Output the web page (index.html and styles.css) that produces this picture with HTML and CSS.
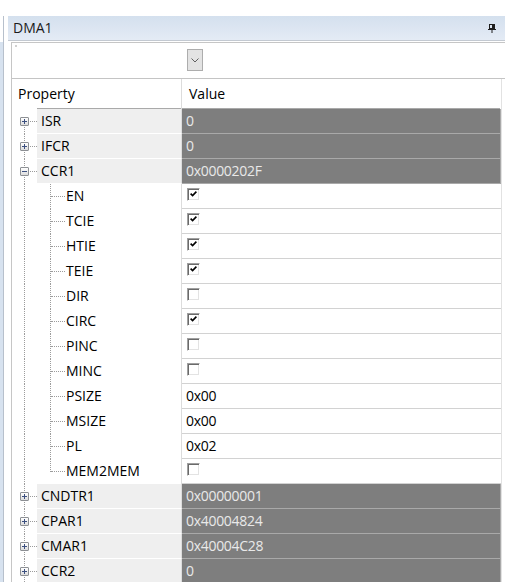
FILE: index.html
```html
<!DOCTYPE html>
<html>
<head>
<meta charset="utf-8">
<link rel="stylesheet" href="styles.css">
</head>
<body>
<div class="frame">
  <div class="side"></div>
  <div class="panel">
    <div class="titlebar">
      <span class="title">DMA1</span>
      <svg class="pin" width="8" height="9" viewBox="0 0 8 9">
        <rect x="1.5" y="0.5" width="5" height="4" fill="none" stroke="#1e1e1e"/>
        <rect x="4" y="1" width="2" height="4" fill="#1e1e1e"/>
        <rect x="0" y="5" width="8" height="1" fill="#1e1e1e"/>
        <rect x="3.5" y="6" width="1" height="3" fill="#1e1e1e"/>
      </svg>
    </div>
    <div class="content">
      <div class="toolbar">
        <div class="ddbtn">
          <svg width="8" height="5" viewBox="0 0 8 5"><polyline points="0.5,0.5 4,4 7.5,0.5" fill="none" stroke="#606060" stroke-width="1"/></svg>
        </div>
      </div>
      <div class="grid">
        <div class="header">
          <div class="h-prop">Property</div>
          <div class="h-val">Value</div>
        </div>

        <div class="row top first">
          <div class="gut"><span class="v"></span><span class="h"></span><span class="exp plus"></span></div>
          <div class="name">ISR</div>
          <div class="val dark">0</div>
        </div>
        <div class="row top">
          <div class="gut"><span class="v"></span><span class="h"></span><span class="exp plus"></span></div>
          <div class="name">IFCR</div>
          <div class="val dark">0</div>
        </div>
        <div class="row top">
          <div class="gut"><span class="v"></span><span class="h"></span><span class="exp minus"></span></div>
          <div class="name">CCR1</div>
          <div class="val dark">0x0000202F</div>
        </div>

        <div class="row child">
          <div class="gut"><span class="v"></span><span class="v2"></span><span class="h2"></span></div>
          <div class="name">EN</div>
          <div class="val cbcell"><span class="cb on"><svg width="7" height="6" viewBox="0 0 7 6"><polyline points="0.6,2.6 2.6,4.6 6.4,0.6" fill="none" stroke="#000" stroke-width="1.6"/></svg></span></div>
        </div>
        <div class="row child">
          <div class="gut"><span class="v"></span><span class="v2"></span><span class="h2"></span></div>
          <div class="name">TCIE</div>
          <div class="val cbcell"><span class="cb on"><svg width="7" height="6" viewBox="0 0 7 6"><polyline points="0.6,2.6 2.6,4.6 6.4,0.6" fill="none" stroke="#000" stroke-width="1.6"/></svg></span></div>
        </div>
        <div class="row child">
          <div class="gut"><span class="v"></span><span class="v2"></span><span class="h2"></span></div>
          <div class="name">HTIE</div>
          <div class="val cbcell"><span class="cb on"><svg width="7" height="6" viewBox="0 0 7 6"><polyline points="0.6,2.6 2.6,4.6 6.4,0.6" fill="none" stroke="#000" stroke-width="1.6"/></svg></span></div>
        </div>
        <div class="row child">
          <div class="gut"><span class="v"></span><span class="v2"></span><span class="h2"></span></div>
          <div class="name">TEIE</div>
          <div class="val cbcell"><span class="cb on"><svg width="7" height="6" viewBox="0 0 7 6"><polyline points="0.6,2.6 2.6,4.6 6.4,0.6" fill="none" stroke="#000" stroke-width="1.6"/></svg></span></div>
        </div>
        <div class="row child">
          <div class="gut"><span class="v"></span><span class="v2"></span><span class="h2"></span></div>
          <div class="name">DIR</div>
          <div class="val cbcell"><span class="cb"></span></div>
        </div>
        <div class="row child">
          <div class="gut"><span class="v"></span><span class="v2"></span><span class="h2"></span></div>
          <div class="name">CIRC</div>
          <div class="val cbcell"><span class="cb on"><svg width="7" height="6" viewBox="0 0 7 6"><polyline points="0.6,2.6 2.6,4.6 6.4,0.6" fill="none" stroke="#000" stroke-width="1.6"/></svg></span></div>
        </div>
        <div class="row child">
          <div class="gut"><span class="v"></span><span class="v2"></span><span class="h2"></span></div>
          <div class="name">PINC</div>
          <div class="val cbcell"><span class="cb"></span></div>
        </div>
        <div class="row child">
          <div class="gut"><span class="v"></span><span class="v2"></span><span class="h2"></span></div>
          <div class="name">MINC</div>
          <div class="val cbcell"><span class="cb"></span></div>
        </div>
        <div class="row child">
          <div class="gut"><span class="v"></span><span class="v2"></span><span class="h2"></span></div>
          <div class="name">PSIZE</div>
          <div class="val">0x00</div>
        </div>
        <div class="row child">
          <div class="gut"><span class="v"></span><span class="v2"></span><span class="h2"></span></div>
          <div class="name">MSIZE</div>
          <div class="val">0x00</div>
        </div>
        <div class="row child">
          <div class="gut"><span class="v"></span><span class="v2"></span><span class="h2"></span></div>
          <div class="name">PL</div>
          <div class="val">0x02</div>
        </div>
        <div class="row child lastchild">
          <div class="gut"><span class="v"></span><span class="v2"></span><span class="h2"></span></div>
          <div class="name">MEM2MEM</div>
          <div class="val cbcell"><span class="cb"></span></div>
        </div>

        <div class="row top">
          <div class="gut"><span class="v"></span><span class="h"></span><span class="exp plus"></span></div>
          <div class="name">CNDTR1</div>
          <div class="val dark">0x00000001</div>
        </div>
        <div class="row top">
          <div class="gut"><span class="v"></span><span class="h"></span><span class="exp plus"></span></div>
          <div class="name">CPAR1</div>
          <div class="val dark">0x40004824</div>
        </div>
        <div class="row top">
          <div class="gut"><span class="v"></span><span class="h"></span><span class="exp plus"></span></div>
          <div class="name">CMAR1</div>
          <div class="val dark">0x40004C28</div>
        </div>
        <div class="row top">
          <div class="gut"><span class="v"></span><span class="h"></span><span class="exp plus"></span></div>
          <div class="name">CCR2</div>
          <div class="val dark">0</div>
        </div>
      </div>
    </div>
  </div>
</div>
</body>
</html>
```
FILE: styles.css
```css
* { box-sizing: border-box; }

body {
  margin: 0;
  width: 505px;
  height: 582px;
  overflow: hidden;
  background: #fff;
  font-family: "Open Sans", "Noto Sans", sans-serif;
  font-size: 14px;
  color: #000;
}

.frame {
  display: flex;
  height: 100%;
  padding-top: 16px;
}

.side {
  flex: none;
  width: 4px;
  border-right: 1px solid #b7c0cc;
  background: linear-gradient(#fff 0 26px, #d7e2ef 26px);
}

.panel {
  flex: 1;
  min-width: 0;
  margin-left: 4px;
  display: flex;
  flex-direction: column;
}

.titlebar {
  flex: none;
  height: 25px;
  display: flex;
  align-items: center;
  justify-content: space-between;
  padding: 0 9px 0 5px;
  background: linear-gradient(#d4e0ee, #e4ebf5);
  border-bottom: 1px solid #c3c9d1;
  color: #1b1b1b;
}

.title { line-height: 24px; }

.pin { display: block; margin-top: 1px; }

.content {
  flex: 1;
  margin: 1px 0 0 3px;
  border-left: 1px solid #c6c6c6;
  border-top: 1px solid #c6c6c6;
}

.toolbar {
  height: 36px;
  padding: 6px 0 0 175px;
  border-bottom: 1px solid #c4c4c4;
  background: linear-gradient(#d0d0d0, #d0d0d0) 3px 2px / 2px 2px no-repeat;
}

.ddbtn {
  width: 16px;
  height: 22px;
  border: 1px solid #adadad;
  background: #e3e3e3;
  display: flex;
  align-items: center;
  justify-content: center;
}

.grid {
  width: 490px;
  border-right: 1px solid #e2e2e2;
}

.header {
  display: flex;
  height: 30px;
  background: linear-gradient(#a9a9a9, #a9a9a9) 25px 100% / 463px 1px no-repeat;
}

.h-prop {
  width: 170px;
  padding: 5px 0 0 6px;
  border-right: 1px solid #dcdcdc;
}

.h-val {
  flex: 1;
  padding: 5px 0 0 7px;
}

.row {
  display: flex;
  height: 25px;
}

.gut {
  position: relative;
  flex: none;
  width: 25px;
}

.child .gut { width: 54px; }

.gut .v {
  position: absolute;
  left: 12px;
  top: 0;
  bottom: 0;
  border-left: 1px dotted #9c9c9c;
}

.first .gut .v { top: 12px; }

.gut .h {
  position: absolute;
  left: 13px;
  top: 12px;
  width: 12px;
  border-top: 1px dotted #9c9c9c;
}

.gut .v2 {
  position: absolute;
  left: 38px;
  top: 0;
  bottom: 0;
  border-left: 1px dotted #9c9c9c;
}

.lastchild .gut .v2 { bottom: 12px; }

.gut .h2 {
  position: absolute;
  left: 39px;
  top: 12px;
  width: 14px;
  border-top: 1px dotted #9c9c9c;
}

.exp {
  position: absolute;
  left: 8px;
  top: 8px;
  width: 9px;
  height: 9px;
  border: 1px solid #8d9094;
  border-radius: 1px;
  background: linear-gradient(#ffffff, #dcdcdc);
}

.exp::before {
  content: "";
  position: absolute;
  left: 1px;
  top: 3px;
  width: 5px;
  height: 1px;
  background: #3b4f7f;
}

.exp.plus::after {
  content: "";
  position: absolute;
  left: 3px;
  top: 1px;
  width: 1px;
  height: 5px;
  background: #3b4f7f;
}

.name {
  flex: none;
  line-height: 24px;
  border-right: 1px solid #dcdcdc;
  white-space: nowrap;
}

.top .name {
  width: 145px;
  padding-left: 4px;
  background: #efefef;
  border-bottom: 1px solid #fff;
}

.child .name {
  width: 116px;
  padding-left: 0;
}

.val {
  flex: 1;
  line-height: 24px;
  padding-left: 4px;
  border-bottom: 1px solid #d2d2d2;
  letter-spacing: -0.3px;
}

.val.dark {
  background: #7e7e7e;
  color: #e9e9e9;
  border-bottom-color: #a9a9a9;
  border-right: 1px solid #a9a9a9;
}

.cbcell {
  display: flex;
  align-items: flex-start;
  padding: 4px 0 0 5px;
}

.cb {
  width: 13px;
  height: 13px;
  border: 1px solid;
  border-color: #a0a0a0 #ffffff #ffffff #a0a0a0;
  box-shadow: inset 1px 1px #6a6a6a, inset -1px -1px #e3e3e3;
  background: #fff;
  display: flex;
  align-items: flex-start;
  justify-content: flex-start;
  padding: 2px 0 0 2px;
}

.cb svg { display: block; }
```
